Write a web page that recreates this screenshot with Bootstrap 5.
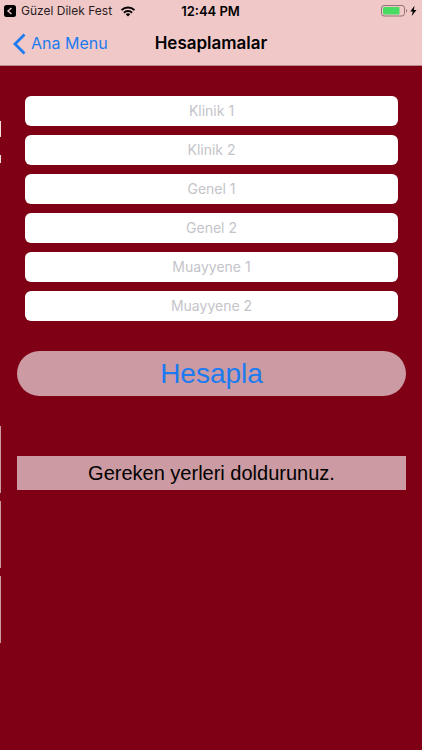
<!DOCTYPE html>
<html lang="tr">
<head>
<meta charset="utf-8">
<meta name="viewport" content="width=device-width, initial-scale=1">
<title>Hesaplamalar</title>
<link href="https://cdn.jsdelivr.net/npm/bootstrap@5.3.0/dist/css/bootstrap.min.css" rel="stylesheet">
<style>
body { background: #7f0014; font-family: Inter, "Liberation Sans", sans-serif; color: #000; }
.top-area { background: #f0c8c8; border-bottom: 1px solid #b98b90; }
.status-row { height: 22px; padding: 0 5px 0 4px; font-size: 12px; line-height: 22px; }
.status-row > *, .title-row > * { flex: 1 1 0; }
.return-link { font-size: 12px; color: #2b1c1e; gap: 5px; }
.clock { font-size: 13px; }
.title-row { height: 43px; padding: 0 12px; font-size: 17px; line-height: 43px; }
.back-link { color: #1c7bf0; gap: 5px; font-size: 16px; }
.title-row h1 { font-size: 17px; line-height: 43px; }
.content { padding: 30px 16px 0 17px; }
.fields { gap: 9px; padding: 0 8px; }
.entry { height: 30px; padding: 0 8px; border: 0; border-radius: 6px; font-size: 14px; line-height: 30px; color: #000; }
.entry::placeholder { color: #c4c4ca; opacity: 1; }
.calc, .calc:hover { height: 45px; margin-top: 30px; padding: 0; border: 0; background: #cb9aa2; color: #1c7bf0; font-family: "Liberation Sans", sans-serif; font-size: 28px; line-height: 45px; }
.result { margin-top: 60px; background: #cb9aa2; font-family: "Liberation Sans", sans-serif; font-size: 20px; line-height: 34px; }
.edge { position: absolute; left: 0; top: 121px; width: 1px; }
.edge i { display: block; height: 67px; margin-bottom: 8px; background: #cb9aa2; }
.edge .pale { background: #f3dfe2; }
.edge .tall { height: 16px; margin-bottom: 18px; }
.edge .short { height: 8px; margin-bottom: 263px; }
</style>
<script defer src="https://cdn.jsdelivr.net/npm/bootstrap@5.3.0/dist/js/bootstrap.bundle.min.js"></script>
</head>
<body>
<header class="top-area">
  <div class="status-row d-flex align-items-center">
    <div>
      <div class="d-flex align-items-center">
        <a href="#" class="return-link d-flex align-items-center text-decoration-none text-nowrap">
          <svg width="12" height="12" viewBox="0 0 12 12" aria-hidden="true"><rect width="12" height="12" rx="2.5" fill="#000"/><path d="M7.5 3 4 6l3.500 3" fill="none" stroke="#f0c8c8" stroke-width="1.400"/></svg>
          Güzel Dilek Fest
        </a>
        <svg class="ms-2 flex-shrink-0" width="16" height="11" viewBox="0 0 15 11" role="img" aria-label="Wi-Fi"><g fill="none" stroke="#000" stroke-width="1.900"><path d="M1 4.200C4.600.600 10.400.600 14 4.200"/><path d="M3.400 6.700c2.300-2.200 5.900-2.200 8.200 0"/></g><path d="M5.200 8.200c1.300-1.200 3.300-1.200 4.600 0L7.500 10.500z"/></svg>
      </div>
    </div>
    <div class="clock text-center fw-semibold">12:44 PM</div>
    <div class="d-flex justify-content-end align-items-center">
      <svg width="36" height="12" viewBox="0 0 36 12" role="img" aria-label="Pil şarj oluyor"><rect x=".5" y=".5" width="23" height="10.500" rx="2.500" fill="none" stroke="#927578"/><rect x="2" y="2" width="16.500" height="7.500" rx="1" fill="#48dc62"/><path d="M25 4c1.600.500 1.600 3 0 3.500z" fill="#927578"/><path d="M33.500.800 29.300 6.500h2.500L30.700 11 35.500 5h-2.700z"/></svg>
    </div>
  </div>
  <nav class="title-row d-flex align-items-center" aria-label="Gezinme">
    <a href="#" class="back-link d-flex align-items-center text-decoration-none text-nowrap">
      <svg width="14" height="22" viewBox="0 0 14 22" aria-hidden="true"><path d="M12.500 1.500 3 11l9.500 9.500" fill="none" stroke="currentColor" stroke-width="2.800"/></svg>
      Ana Menu
    </a>
    <h1 class="m-0 text-center fw-semibold">Hesaplamalar</h1>
    <span></span>
  </nav>
</header>
<main class="content">
  <form>
    <div class="fields d-flex flex-column">
      <input class="entry form-control text-center" type="text" aria-label="Klinik 1" placeholder="Klinik 1">
      <input class="entry form-control text-center" type="text" aria-label="Klinik 2" placeholder="Klinik 2">
      <input class="entry form-control text-center" type="text" aria-label="Genel 1" placeholder="Genel 1">
      <input class="entry form-control text-center" type="text" aria-label="Genel 2" placeholder="Genel 2">
      <input class="entry form-control text-center" type="text" aria-label="Muayyene 1" placeholder="Muayyene 1">
      <input class="entry form-control text-center" type="text" aria-label="Muayyene 2" placeholder="Muayyene 2">
    </div>
    <button type="button" class="calc btn rounded-pill w-100">Hesapla</button>
  </form>
  <p class="result mb-0 text-center">Gereken yerleri doldurunuz.</p>
</main>
<div class="edge" aria-hidden="true"><i class="pale tall"></i><i class="pale short"></i><i></i><i></i><i></i></div>
</body>
</html>
